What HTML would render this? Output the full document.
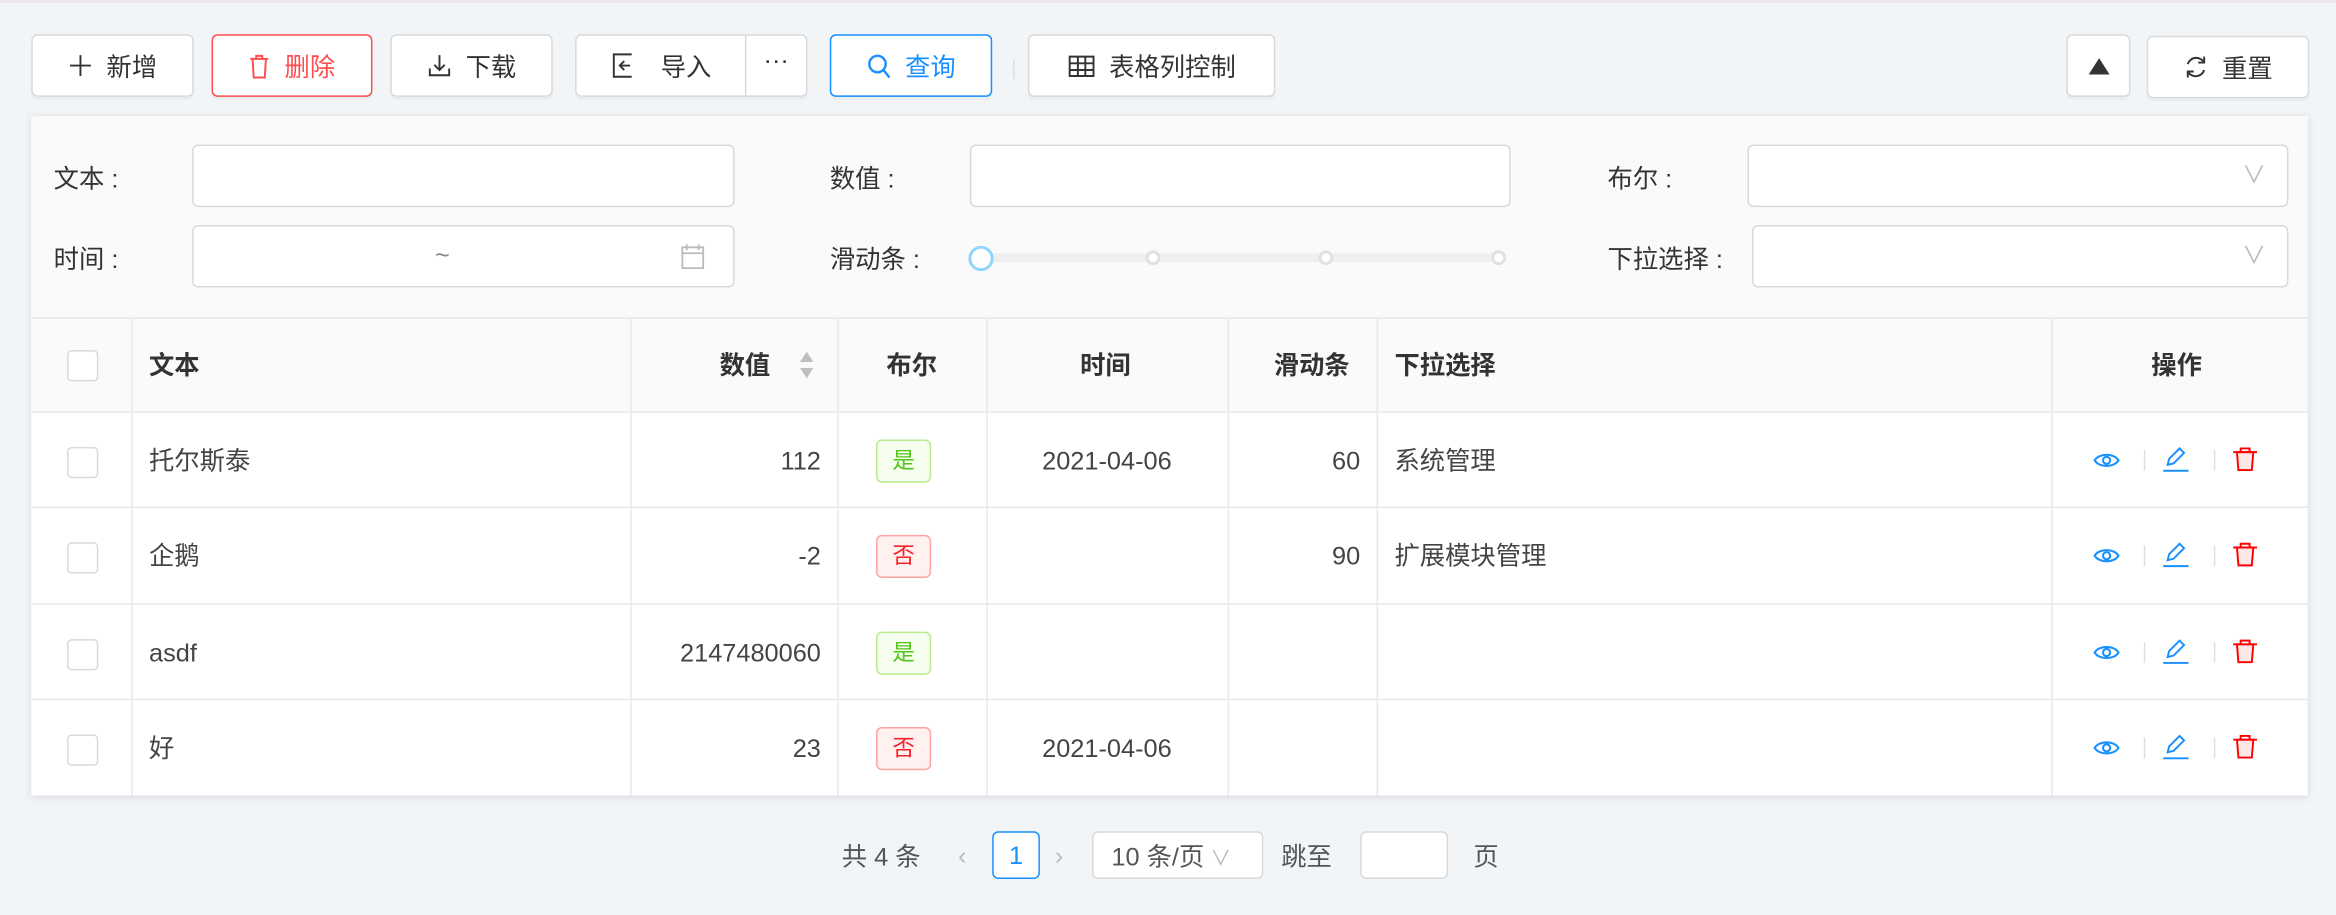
<!DOCTYPE html>
<html><head><meta charset="utf-8"><style>
*{box-sizing:border-box;margin:0;padding:0}
html,body{width:2336px;height:914px;overflow:hidden;background:#f2f5f8}
#s{position:absolute;left:0;top:0;width:1568px;height:614px;transform:scale(1.4898);transform-origin:0 0;font-family:"Liberation Sans","Noto Sans CJK SC",sans-serif;font-size:17px;line-height:24px;color:#333;background:#f2f5f8}
.a{position:absolute;white-space:nowrap}
.btn{position:absolute;top:23px;height:42px;background:#fff;border:1px solid #d9d9d9;border-radius:4px;display:flex;align-items:center;justify-content:center;gap:10px;box-shadow:0 2px 0 rgba(0,0,0,.03);color:#333;line-height:20px;white-space:nowrap}
.btn span{margin-top:3px}
.lbl{position:absolute;font-size:17px;color:#333;white-space:nowrap}
.inp{position:absolute;height:42px;background:#fff;border:1px solid #d9d9d9;border-radius:4px}
.tag{display:inline-flex;width:37px;height:29px;border-radius:4px;align-items:center;justify-content:center;font-size:15px}
.y{background:#f6ffed;border:1px solid #b7eb8f;color:#52c41a}
.n{background:#fff1f0;border:1px solid #ffa39e;color:#f5222d}
.cb{width:21px;height:21px;border:1px solid #d9d9d9;border-radius:3px;background:#fff}
.hl{position:absolute;left:0;width:1528px;height:1px;background:#e8e8e8}
.vl{position:absolute;top:0;width:1px;height:320px;background:#e8e8e8}
</style></head><body><div id="s">
<div class="a" style="left:0;top:0;width:1568px;height:2px;background:#f0e6ea"></div>
<div class="btn" style="left:21px;width:109px"><svg width="16" height="16" viewBox="0 0 16 16"><path d="M8 1v14M1 8h14" stroke="#333" stroke-width="1.3"/></svg><span>新增</span></div>
<div class="btn" style="left:142px;width:108px;border-color:#ff4d4f;color:#ff4d4f"><svg width="14" height="17" viewBox="0 0 14 17"><path d="M1 3.5h12M5 3.5V1.5h4v2M2.5 3.5l.8 12.5h7.4l.8-12.5" fill="none" stroke="#ff4d4f" stroke-width="1.3"/></svg><span>删除</span></div>
<div class="btn" style="left:262px;width:109px"><svg width="16" height="16" viewBox="0 0 16 16"><path d="M8 1v10M4.5 7.5L8 11l3.5-3.5M1.5 10v4.5h13V10" fill="none" stroke="#333" stroke-width="1.3"/></svg><span>下载</span></div>
<div class="btn" style="left:386px;width:156px;justify-content:flex-start;gap:0"><div style="width:114px;display:flex;justify-content:center;gap:18px;align-items:center;border-right:1px solid #d9d9d9;height:40px"><svg width="16" height="18" viewBox="0 0 16 18"><path d="M14 1.5H2v15h12M6 9h7M9 6l-3 3 3 3" fill="none" stroke="#333" stroke-width="1.3"/></svg><span>导入</span></div><div style="width:40px;text-align:center;margin-top:-6px">···</div></div>
<div class="btn" style="left:557px;width:109px;border-color:#1890ff;color:#1890ff"><svg width="16" height="17" viewBox="0 0 16 17"><circle cx="7" cy="7" r="5.5" fill="none" stroke="#1890ff" stroke-width="1.6"/><path d="M11 11l4 5" stroke="#1890ff" stroke-width="1.6"/></svg><span>查询</span></div>
<div class="a" style="left:680px;top:40px;width:1px;height:13px;background:#ddd"></div>
<div class="btn" style="left:690px;width:166px"><svg width="18" height="15" viewBox="0 0 18 15"><path d="M1 1h16v13H1zM1 5.5h16M1 10h16M6.5 1v13M11.5 1v13" fill="none" stroke="#333" stroke-width="1.3"/></svg><span>表格列控制</span></div>
<div class="btn" style="left:1387px;width:43px"><svg width="14" height="11" viewBox="0 0 14 11"><path d="M7 0l7 11H0z" fill="#333"/></svg></div>
<div class="btn" style="left:1441px;width:109px;top:24px"><svg width="16" height="18" viewBox="0 0 16 18"><path d="M13.5 6A6 6 0 0 0 2.5 7M2.5 12A6 6 0 0 0 13.5 11M13.5 2v4h-4M2.5 16v-4h4" fill="none" stroke="#333" stroke-width="1.3"/></svg><span>重置</span></div>

<div class="a" style="left:21px;top:78px;width:1528px;height:456px;background:#fff;box-shadow:0 1px 6px rgba(0,0,0,.12)">
 <div class="a" style="left:0;top:0;width:1528px;height:136px;background:#fafafa;border-bottom:1px solid #e6e6e6"></div>
 <div class="lbl" style="left:15px;top:31px">文本 :</div>
 <div class="inp" style="left:108px;top:19px;width:364px"></div>
 <div class="lbl" style="left:15px;top:85px">时间 :</div>
 <div class="inp" style="left:108px;top:73px;width:364px"><span class="a" style="left:162px;top:8px;color:#888">~</span><svg class="a" style="left:327px;top:11px" width="16" height="18" viewBox="0 0 16 18"><path d="M1 3h14v14H1zM1 7h14M4 1v4M12 1v4" fill="none" stroke="#bbb" stroke-width="1.2"/></svg></div>
 <div class="lbl" style="left:536px;top:31px">数值 :</div>
 <div class="inp" style="left:630px;top:19px;width:363px"></div>
 <div class="lbl" style="left:536px;top:85px">滑动条 :</div>
 <div class="a" style="left:637px;top:92px;width:350px;height:6px;background:#efefef;border-radius:3px"></div>
 <div class="a" style="left:629px;top:87px;width:17px;height:17px;border:2px solid #91d5ff;border-radius:50%;background:#fff"></div>
 <div class="a" style="left:748px;top:90px;width:10px;height:10px;border:2px solid #e1e1e1;border-radius:50%;background:#fff"></div>
 <div class="a" style="left:864px;top:90px;width:10px;height:10px;border:2px solid #e1e1e1;border-radius:50%;background:#fff"></div>
 <div class="a" style="left:980px;top:90px;width:10px;height:10px;border:2px solid #e1e1e1;border-radius:50%;background:#fff"></div>
 <div class="lbl" style="left:1058px;top:31px">布尔 :</div>
 <div class="inp" style="left:1152px;top:19px;width:363px"><span class="a" style="right:14px;top:9px;color:#bbb;font-size:16px">∨</span></div>
 <div class="lbl" style="left:1058px;top:85px">下拉选择 :</div>
 <div class="inp" style="left:1155px;top:73px;width:360px"><span class="a" style="right:14px;top:9px;color:#bbb;font-size:16px">∨</span></div>

 <div class="a" style="left:0;top:136px;width:1528px;height:320px">
  <div class="a" style="left:0;top:0;width:1528px;height:62px;background:#fafafa"></div>
  <div class="hl" style="top:62px"></div><div class="hl" style="top:126px"></div><div class="hl" style="top:191px"></div><div class="hl" style="top:255px"></div>
  <div class="vl" style="left:67px"></div><div class="vl" style="left:402px"></div><div class="vl" style="left:541px"></div><div class="vl" style="left:641px"></div><div class="vl" style="left:803px"></div><div class="vl" style="left:903px"></div><div class="vl" style="left:1356px"></div>
  <div class="cb a" style="left:24px;top:21px"></div>
  <div class="a" style="left:79px;top:20px;font-weight:bold">文本</div>
  <div class="a" style="left:462px;top:20px;font-weight:bold">数值</div>
  <svg class="a" style="left:515px;top:21px" width="11" height="20" viewBox="0 0 11 20"><path d="M5.5 1L10 8H1zM5.5 19L10 12H1z" fill="#bfbfbf"/></svg>
  <div class="a" style="left:574px;top:20px;font-weight:bold">布尔</div>
  <div class="a" style="left:704px;top:20px;font-weight:bold">时间</div>
  <div class="a" style="left:834px;top:20px;font-weight:bold">滑动条</div>
  <div class="a" style="left:915px;top:20px;font-weight:bold">下拉选择</div>
  <div class="a" style="left:1423px;top:20px;font-weight:bold">操作</div>
  <div id="rows"></div>
 </div>
</div>

<div class="a" style="left:565px;top:564px;color:#555">共 4 条</div>
<div class="a" style="left:643px;top:563px;color:#bbb">‹</div>
<div class="a" style="left:666px;top:558px;width:32px;height:32px;border:1px solid #1890ff;border-radius:4px;color:#1890ff;text-align:center;line-height:31px;background:#fff">1</div>
<div class="a" style="left:708px;top:563px;color:#bbb">›</div>
<div class="a" style="left:733px;top:558px;width:115px;height:32px;border:1px solid #d9d9d9;border-radius:4px;background:#fff;padding:5px 12px 0;color:#555">10 条/页<span style="color:#bbb;font-size:14px;margin-left:4px">∨</span></div>
<div class="a" style="left:860px;top:564px;color:#555">跳至</div>
<div class="a" style="left:913px;top:558px;width:59px;height:32px;border:1px solid #d9d9d9;border-radius:4px;background:#fff"></div>
<div class="a" style="left:989px;top:564px;color:#555">页</div>
</div>
<script>
var d=[["托尔斯泰","112",1,"2021-04-06","60","系统管理"],["企鹅","-2",0,"","90","扩展模块管理"],["asdf","2147480060",1,"","",""],["好","23",0,"2021-04-06","",""]];
var tops=[63,127,192,256],h="";
d.forEach(function(r,i){var t=tops[i];
h+='<div class="cb a" style="left:24px;top:'+(t+23)+'px"></div>';
h+='<div class="a" style="left:79px;top:'+(t+21)+'px;color:#444">'+r[0]+'</div>';
h+='<div class="a" style="left:402px;width:128px;text-align:right;top:'+(t+21)+'px;color:#444">'+r[1]+'</div>';
h+='<div class="a" style="left:567px;top:'+(t+18)+'px"><span class="tag '+(r[2]?'y':'n')+'">'+(r[2]?'是':'否')+'</span></div>';
h+='<div class="a" style="left:641px;width:162px;text-align:center;top:'+(t+21)+'px;color:#444">'+r[3]+'</div>';
h+='<div class="a" style="left:803px;width:89px;text-align:right;top:'+(t+21)+'px;color:#444">'+r[4]+'</div>';
h+='<div class="a" style="left:915px;top:'+(t+21)+'px;color:#444">'+r[5]+'</div>';
h+='<svg class="a" style="left:1384px;top:'+(t+26)+'px" width="18" height="12" viewBox="0 0 18 12"><path d="M1 6C4 1 14 1 17 6C14 11 4 11 1 6z" fill="none" stroke="#1890ff" stroke-width="1.4"/><circle cx="9" cy="6" r="2.4" fill="none" stroke="#1890ff" stroke-width="1.4"/></svg>';
h+='<div class="a" style="left:1418px;top:'+(t+25)+'px;width:1px;height:14px;background:#e0e0e0"></div>';
h+='<svg class="a" style="left:1430px;top:'+(t+22)+'px" width="18" height="18" viewBox="0 0 18 18"><path d="M4 13l1-4 7-7 3 3-7 7zM1 17h17" fill="none" stroke="#1890ff" stroke-width="1.3"/></svg>';
h+='<div class="a" style="left:1465px;top:'+(t+25)+'px;width:1px;height:14px;background:#e0e0e0"></div>';
h+='<svg class="a" style="left:1477px;top:'+(t+22)+'px" width="18" height="18" viewBox="0 0 18 18"><path d="M3.5 4.5l1 12h9l1-12z" fill="#fde8e8" stroke="#f00" stroke-width="1.3"/><path d="M1 4.5h16M6 4.5V2h6v2.5" fill="none" stroke="#f00" stroke-width="1.3"/></svg>';
});
document.getElementById("rows").innerHTML=h;
</script>
</body></html>
